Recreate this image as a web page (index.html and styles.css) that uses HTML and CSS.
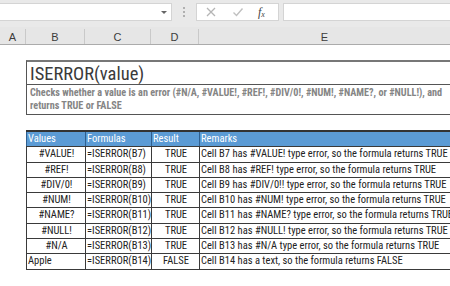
FILE: index.html
```html
<!DOCTYPE html>
<html>
<head>
<meta charset="utf-8">
<link rel="stylesheet" href="styles.css">
</head>
<body>
<div class="app">
  <div class="toolbar">
    <div class="namebox"><span class="arrow"></span></div>
    <div class="grip"><i></i><i></i><i></i></div>
    <div class="fnbox">
      <svg class="ic" width="12" height="12" viewBox="0 0 12 12"><path d="M2 2 L10 10 M10 2 L2 10" stroke="#b5b5b5" stroke-width="1.3" fill="none"/></svg>
      <svg class="ic" width="12" height="12" viewBox="0 0 12 12"><path d="M1.5 6.5 L4.5 9.5 L10.5 2.5" stroke="#c0c0c0" stroke-width="1.4" fill="none"/></svg>
      <span class="fx">f<sub>x</sub></span>
    </div>
    <div class="formula"></div>
  </div>
  <div class="colhead">
    <div class="ch c-a">A</div>
    <div class="ch c-b">B</div>
    <div class="ch c-c">C</div>
    <div class="ch c-d">D</div>
    <div class="ch c-e">E</div>
  </div>
  <div class="sheet">
    <div class="titlebox">
      <div class="title">ISERROR(value)</div>
      <div class="desc">Checks whether a value is an error (#N/A, #VALUE!, #REF!, #DIV/0!, #NUM!, #NAME?, or #NULL!), and returns TRUE or FALSE</div>
    </div>
    <div class="grid">
      <div class="row head"><div>Values</div><div>Formulas</div><div>Result</div><div>Remarks</div></div>
      <div class="row"><div class="v">#VALUE!</div><div>=ISERROR(B7)</div><div class="r">TRUE</div><div>Cell B7 has #VALUE! type error, so the formula returns TRUE</div></div>
      <div class="row"><div class="v">#REF!</div><div>=ISERROR(B8)</div><div class="r">TRUE</div><div>Cell B8 has #REF! type error, so the formula returns TRUE</div></div>
      <div class="row"><div class="v">#DIV/0!</div><div>=ISERROR(B9)</div><div class="r">TRUE</div><div>Cell B9 has #DIV/0!! type error, so the formula returns TRUE</div></div>
      <div class="row"><div class="v">#NUM!</div><div>=ISERROR(B10)</div><div class="r">TRUE</div><div>Cell B10 has #NUM! type error, so the formula returns TRUE</div></div>
      <div class="row"><div class="v">#NAME?</div><div>=ISERROR(B11)</div><div class="r">TRUE</div><div>Cell B11 has #NAME? type error, so the formula returns TRUE</div></div>
      <div class="row"><div class="v">#NULL!</div><div>=ISERROR(B12)</div><div class="r">TRUE</div><div>Cell B12 has #NULL! type error, so the formula returns TRUE</div></div>
      <div class="row"><div class="v">#N/A</div><div>=ISERROR(B13)</div><div class="r">TRUE</div><div>Cell B13 has #N/A type error, so the formula returns TRUE</div></div>
      <div class="row"><div>Apple</div><div>=ISERROR(B14)</div><div class="r">FALSE</div><div>Cell B14 has a text, so the formula returns FALSE</div></div>
    </div>
  </div>
</div>
</body>
</html>
```
FILE: styles.css
```css
html, body { margin: 0; padding: 0; background: #fff; }
body { width: 450px; height: 286px; overflow: hidden; font-family: "Liberation Sans Narrow", "Roboto Condensed", "Liberation Sans", sans-serif; }
.app { width: 450px; }
.toolbar { height: 27px; background: #e9e9e9; display: flex; align-items: flex-start; padding-top: 3px; box-sizing: border-box; }
.namebox { width: 172px; height: 18px; background: #fff; border: 1px solid #d4d4d4; border-left: none; box-sizing: border-box; position: relative; }
.arrow { position: absolute; left: 161px; top: 7px; width: 0; height: 0; border-left: 3px solid transparent; border-right: 3px solid transparent; border-top: 3px solid #666; }
.grip { width: 24px; height: 18px; display: flex; flex-direction: column; align-items: center; justify-content: center; gap: 2px; }
.grip i { display: block; width: 2px; height: 2px; background: #b0b0b0; }
.fnbox { width: 83px; height: 18px; background: #fff; border: 1px solid #d4d4d4; box-sizing: border-box; display: flex; align-items: center; padding-left: 8px; gap: 15px; }
.ic { display: block; }
.fx { font-family: "Liberation Serif", serif; font-style: italic; font-size: 12px; color: #444; margin-left: -1px; }
.fx sub { font-size: 8px; vertical-align: -1px; }
.formula { margin-left: 4px; flex: 1; height: 18px; background: #fff; border: 1px solid #d4d4d4; border-right: none; box-sizing: border-box; }
.colhead { height: 18px; background: #e6e6e6; border-bottom: 1px solid #ababab; display: flex; box-sizing: border-box; }
.ch { box-sizing: border-box; border-right: 1px solid #c9c9c9; margin-top: 2px; padding-top: 2px; font-family: "Liberation Sans", sans-serif; font-size: 11px; color: #3c3c3c; text-align: center; line-height: 13px; }
.c-a { width: 26px; }
.c-b { width: 59px; }
.c-c { width: 66px; }
.c-d { width: 48px; }
.c-e { flex: 1; border-right: none; }
.sheet { padding: 15px 0 0 26px; }
.titlebox { width: 440px; border: 1px solid #555; border-top: 2px solid #777; border-right: none; }
.title { height: 22px; line-height: 24px; padding-left: 3px; font-size: 18.5px; color: #3a3a3a; border-bottom: 1px solid #555; }
.desc { height: 29px; padding: 2px 3px 0; box-sizing: border-box; font-size: 10.2px; line-height: 12.5px; font-weight: bold; color: #858585; }
.grid { margin-top: 15px; width: 440px; border-top: 2px solid #333; }
.row { display: grid; grid-template-columns: 59px 66px 48px 1fr; height: 15.3px; box-sizing: border-box; border-bottom: 1px solid #3a3a3a; font-size: 10.5px; color: #222; }
.row > div { border-left: 1px solid #3a3a3a; padding-left: 1px; line-height: 14px; white-space: nowrap; overflow: hidden; }
.row.head { background: #5b9bd5; color: #fff; }
.row.head > div { border-left-color: #2f5f8f; }
.v { text-align: center; }
.r { text-align: center; }
```
